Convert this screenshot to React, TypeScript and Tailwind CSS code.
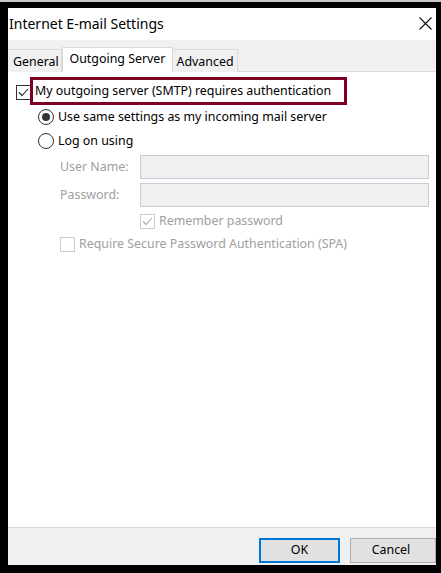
import React from 'react';

const font = { fontFamily: '"Noto Sans", "Open Sans", sans-serif' };

const Check: React.FC<{ checked?: boolean; disabled?: boolean }> = ({ checked, disabled }) => (
  <span
    className={`flex h-[15px] w-[15px] shrink-0 items-center justify-center border bg-white ${
      disabled ? 'border-[#cccccc]' : 'border-[#333333]'
    }`}
  >
    {checked && (
      <svg width="11" height="11" viewBox="0 0 11 11">
        <path d="M1 5.5 L4 8.5 L10 2" fill="none" stroke={disabled ? '#a8a8a8' : '#222222'} strokeWidth="1.1" />
      </svg>
    )}
  </span>
);

const Radio: React.FC<{ checked?: boolean }> = ({ checked }) => (
  <span className="flex h-[16px] w-[16px] shrink-0 items-center justify-center rounded-full border border-[#333333] bg-white">
    {checked && <span className="h-[8px] w-[8px] rounded-full bg-[#333333]" />}
  </span>
);

const App: React.FC = () => {
  return (
    <div className="h-[573px] w-[441px] bg-black" style={font}>
      <div className="h-[2px] bg-[#c9c9c9]" />
      <div className="flex h-[571px] flex-col pt-[6px] pl-[8px] pr-[5px] pb-[8px]">
        <div className="flex h-[557px] flex-col overflow-hidden whitespace-nowrap bg-white">
          {/* title bar */}
          <div className="flex h-[32px] shrink-0 items-center justify-between bg-white pl-[1px] pr-[4px]">
            <span className="text-[14px] leading-none text-black">Internet E-mail Settings</span>
            <svg width="13" height="13" viewBox="0 0 13 13" className="mb-[1px]">
              <path d="M0.5 0.5 L12.5 12.5 M12.5 0.5 L0.5 12.5" stroke="#111111" strokeWidth="1.1" />
            </svg>
          </div>

          {/* tab strip */}
          <div className="flex h-[32px] shrink-0 items-end border-b border-[#d9d9d9] bg-[#f0f0f0] text-[12.4px] leading-none text-black">
            <div className="-mb-px flex h-[23px] w-[54px] items-center border-r border-t border-[#d9d9d9] bg-[#f0f0f0] pl-[5px] pt-[2px]">
              General
            </div>
            <div className="-mb-px flex h-[25px] w-[111px] items-center justify-center border-x border-t border-[#d9d9d9] bg-white pb-[1px]">
              Outgoing Server
            </div>
            <div className="-mb-px flex h-[23px] w-[65px] items-center justify-center border-r border-t border-[#d9d9d9] bg-[#f0f0f0] pt-[2px]">
              Advanced
            </div>
          </div>

          {/* content */}
          <div className="flex flex-1 flex-col pt-[5px] text-[12.4px] leading-none text-black">
            <div className="flex items-center pl-[8px]">
              <span className="mt-[3px]">
                <Check checked />
              </span>
              <div className="ml-[-1px] flex h-[28px] w-[317px] items-center border-[3px] border-[#7d0022] pl-[2px] pt-[1px]">
                My outgoing server (SMTP) requires authentication
              </div>
            </div>

            <div className="mt-[1px] flex h-[22px] items-center pl-[30px]">
              <Radio checked />
              <span className="ml-[4px]">Use same settings as my incoming mail server</span>
            </div>
            <div className="mt-[2px] flex h-[22px] items-center pl-[30px]">
              <Radio />
              <span className="ml-[4px]">Log on using</span>
            </div>

            <div className="mt-[3px] flex flex-col gap-[4px] pl-[52px] pr-[7px] text-[#a0a0a0]">
              <div className="flex items-center">
                <span className="w-[80px]">User Name:</span>
                <div className="h-[24px] flex-1 border border-[#c5ccd4] bg-[#f0f0f0]" />
              </div>
              <div className="flex items-center">
                <span className="w-[80px]">Password:</span>
                <div className="h-[24px] flex-1 border border-[#c5ccd4] bg-[#f0f0f0]" />
              </div>
            </div>

            <div className="mt-[7px] flex items-center pl-[132px] text-[#a0a0a0]">
              <Check checked disabled />
              <span className="ml-[4px]">Remember password</span>
            </div>
            <div className="mt-[8px] flex items-center pl-[52px] text-[#a0a0a0]">
              <Check disabled />
              <span className="ml-[4px]">Require Secure Password Authentication (SPA)</span>
            </div>
          </div>

          {/* footer */}
          <div className="flex h-[38px] shrink-0 items-start gap-[10px] border-t border-[#dadada] bg-[#f0f0f0] pl-[251px] pt-[10px] text-[12.4px] leading-none text-black">
            <button className="flex h-[25px] w-[85px] items-center justify-center border-2 border-[#0078d7] bg-[#e1e1e1]">
              OK
            </button>
            <button className="flex h-[25px] w-[86px] shrink-0 items-center justify-center border border-[#adadad] bg-[#e1e1e1] pr-[4px]">
              Cancel
            </button>
          </div>
        </div>
      </div>
    </div>
  );
};

export default App;
